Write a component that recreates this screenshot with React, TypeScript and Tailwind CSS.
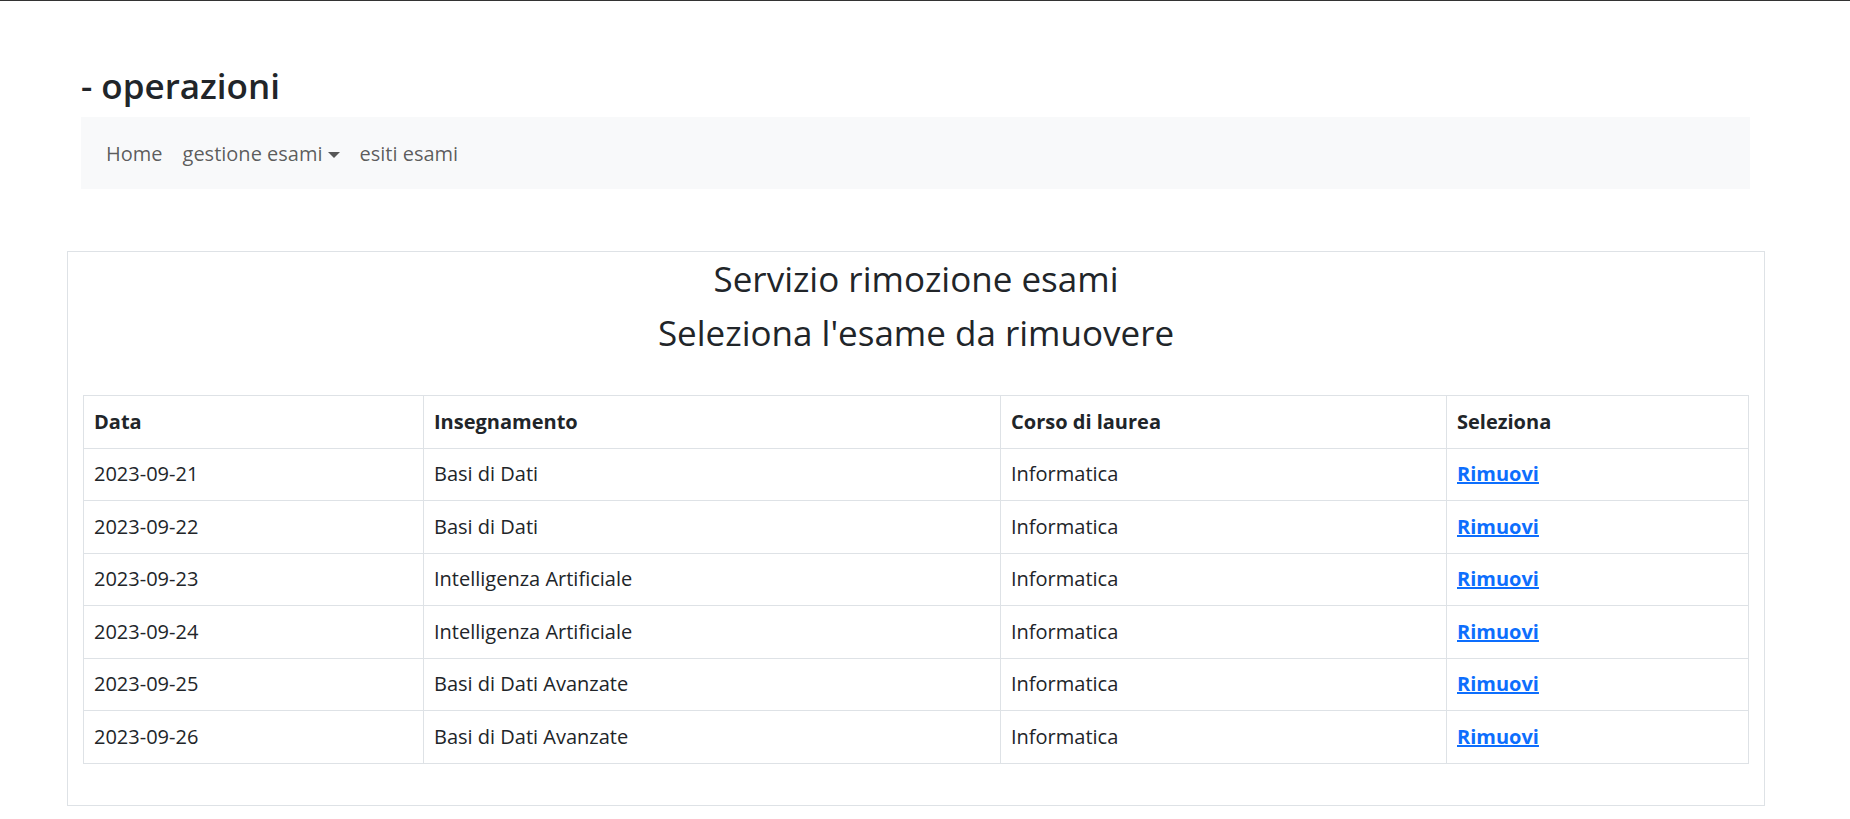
import React from "react";

const rows = [
  ["2023-09-21", "Basi di Dati", "Informatica"],
  ["2023-09-22", "Basi di Dati", "Informatica"],
  ["2023-09-23", "Intelligenza Artificiale", "Informatica"],
  ["2023-09-24", "Intelligenza Artificiale", "Informatica"],
  ["2023-09-25", "Basi di Dati Avanzate", "Informatica"],
  ["2023-09-26", "Basi di Dati Avanzate", "Informatica"],
];

export default function App() {
  return (
    <div
      className="w-[1850px] h-[819px] overflow-hidden bg-white text-[#212529] border-t border-[#333333]"
      style={{ fontFamily: '"Segoe UI", "Open Sans", "Noto Sans", sans-serif' }}
    >
      <div className="ml-[81px] w-[1669px] pt-[64px]">
        <h2 className="text-[35px] leading-[42px] font-semibold m-0">- operazioni</h2>
        <nav className="mt-[10px] h-[72px] bg-[#f8f9fa] flex items-center px-[15px]">
          <ul className="flex items-center text-[20px] leading-[30px] text-black/65 pt-[2px]">
            <li className="px-[10px]">Home</li>
            <li className="px-[10px] flex items-center">
              gestione esami
              <span className="ml-[5px] mt-[1px] inline-block w-0 h-0 border-t-[6px] border-t-current border-x-[6px] border-x-transparent" />
            </li>
            <li className="px-[10px]">esiti esami</li>
          </ul>
        </nav>
      </div>

      <div className="ml-[67px] w-[1698px] mt-[62px] h-[555px] border border-[#dee2e6] px-[15px] pt-[6px]">
        <h3 className="text-[35px] leading-[42px] font-normal text-center">Servizio rimozione esami</h3>
        <h3 className="mt-[12px] text-[35px] leading-[42px] font-normal text-center">
          Seleziona l'esame da rimuovere
        </h3>
        <table className="mt-[41px] w-full table-fixed border-collapse text-[20px] leading-[30px]">
          <colgroup>
            <col className="w-[340px]" />
            <col className="w-[577px]" />
            <col className="w-[446px]" />
            <col />
          </colgroup>
          <thead>
            <tr>
              {["Data", "Insegnamento", "Corso di laurea", "Seleziona"].map((h) => (
                <th
                  key={h}
                  className="border border-[#dee2e6] px-[10px] py-[10.75px] text-left font-bold"
                >
                  {h}
                </th>
              ))}
            </tr>
          </thead>
          <tbody>
            {rows.map((r, i) => (
              <tr key={i}>
                {r.map((c, j) => (
                  <td key={j} className="border border-[#dee2e6] px-[10px] py-[10.75px]">
                    {c}
                  </td>
                ))}
                <td className="border border-[#dee2e6] px-[10px] py-[10.75px]">
                  <a href="#" className="text-[#0d6efd] font-bold underline">
                    Rimuovi
                  </a>
                </td>
              </tr>
            ))}
          </tbody>
        </table>
      </div>
    </div>
  );
}
